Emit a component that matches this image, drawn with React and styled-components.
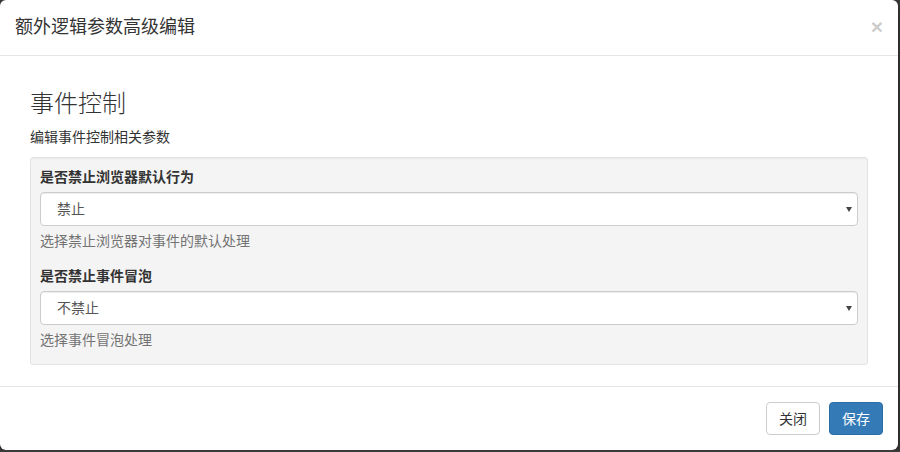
import React from "react";
import styled, { createGlobalStyle } from "styled-components";

const GlobalStyle = createGlobalStyle`
  html, body {
    margin: 0;
    padding: 0;
    background: #3b3b3b;
    font-family: "Liberation Sans", "Noto Sans CJK SC", sans-serif;
    font-size: 14px;
    line-height: 20px;
    color: #333;
  }
  * {
    box-sizing: border-box;
  }
`;

const Modal = styled.div`
  width: 898px;
  background: #fff;
  border-radius: 6px;
  box-shadow: 0 3px 9px rgba(0, 0, 0, 0.5);
  overflow: hidden;
`;

const Header = styled.div`
  display: flex;
  align-items: center;
  justify-content: space-between;
  height: 56px;
  padding: 0 15px;
  border-bottom: 1px solid #e5e5e5;
`;

const Title = styled.h4`
  margin: 0;
  font-size: 18px;
  font-weight: 400;
  line-height: 25px;
  color: #333;
`;

const Close = styled.button`
  border: 0;
  background: transparent;
  padding: 0;
  margin-top: -2px;
  font-family: "Liberation Sans", sans-serif;
  font-size: 21px;
  font-weight: 700;
  line-height: 1;
  color: #000;
  opacity: 0.2;
  text-shadow: 0 1px 0 #fff;
  cursor: pointer;
`;

const Body = styled.div`
  padding: 15px 30px 21px;
`;

const Heading = styled.h3`
  margin: 20px 0 10px;
  font-size: 24px;
  font-weight: 300;
  line-height: 26px;
  color: #333;
`;

const Lead = styled.p`
  margin: 0 0 10px;
`;

const Well = styled.div`
  background: #f4f4f4;
  border: 1px solid #e3e3e3;
  border-radius: 3px;
  padding: 9px 9px 4px;
  box-shadow: inset 0 1px 1px rgba(0, 0, 0, 0.05);
`;

const Group = styled.div`
  margin-bottom: ${(p) => (p.$last ? "0" : "15px")};
`;

const Label = styled.label`
  display: block;
  margin-bottom: 5px;
  font-weight: 700;
  color: #333;
`;

const SelectWrap = styled.div`
  position: relative;
  &::after {
    content: "";
    position: absolute;
    right: 6px;
    top: 15px;
    border-left: 3.5px solid transparent;
    border-right: 3.5px solid transparent;
    border-top: 5px solid #444;
    pointer-events: none;
  }
`;

const Select = styled.select`
  display: block;
  width: 100%;
  height: 34px;
  padding: 6px 16px;
  appearance: none;
  -webkit-appearance: none;
  background: #fff;
  border: 1px solid #ccc;
  border-radius: 4px;
  box-shadow: inset 0 1px 1px rgba(0, 0, 0, 0.075);
  font-family: inherit;
  font-size: 14px;
  line-height: 20px;
  color: #555;
`;

const Help = styled.span`
  display: block;
  margin: 5px 0 10px;
  color: #737373;
`;

const Footer = styled.div`
  display: flex;
  justify-content: flex-end;
  gap: 9px;
  padding: 15px;
  border-top: 1px solid #e5e5e5;
`;

const Button = styled.button`
  height: 33px;
  padding: 0 12px;
  font-family: inherit;
  font-size: 14px;
  line-height: 20px;
  border-radius: 4px;
  border: 1px solid ${(p) => (p.$primary ? "#2e6da4" : "#ccc")};
  background: ${(p) => (p.$primary ? "#337ab7" : "#fff")};
  color: ${(p) => (p.$primary ? "#fff" : "#333")};
  cursor: pointer;
`;

export default function App() {
  return (
    <>
      <GlobalStyle />
      <Modal>
        <Header>
          <Title>额外逻辑参数高级编辑</Title>
          <Close>×</Close>
        </Header>
        <Body>
          <Heading>事件控制</Heading>
          <Lead>编辑事件控制相关参数</Lead>
          <Well>
            <Group>
              <Label>是否禁止浏览器默认行为</Label>
              <SelectWrap>
                <Select defaultValue="1">
                  <option value="1">禁止</option>
                  <option value="0">不禁止</option>
                </Select>
              </SelectWrap>
              <Help>选择禁止浏览器对事件的默认处理</Help>
            </Group>
            <Group $last>
              <Label>是否禁止事件冒泡</Label>
              <SelectWrap>
                <Select defaultValue="0">
                  <option value="1">禁止</option>
                  <option value="0">不禁止</option>
                </Select>
              </SelectWrap>
              <Help>选择事件冒泡处理</Help>
            </Group>
          </Well>
        </Body>
        <Footer>
          <Button>关闭</Button>
          <Button $primary>保存</Button>
        </Footer>
      </Modal>
    </>
  );
}
